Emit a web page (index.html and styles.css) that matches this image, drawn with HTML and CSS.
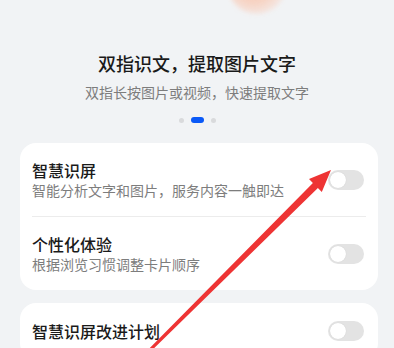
FILE: index.html
```html
<!DOCTYPE html>
<html lang="zh">
<head>
<meta charset="utf-8">
<link rel="stylesheet" href="styles.css">
</head>
<body>
<div class="page">
  <div class="hero-art"></div>
  <h1 class="title">双指识文，提取图片文字</h1>
  <p class="subtitle">双指长按图片或视频，快速提取文字</p>
  <div class="dots"><span class="dot"></span><span class="dot active"></span><span class="dot"></span></div>

  <section class="card">
    <div class="row">
      <div class="texts">
        <div class="row-title">智慧识屏</div>
        <div class="row-sub">智能分析文字和图片，服务内容一触即达</div>
      </div>
      <span class="toggle"><span class="knob"></span></span>
    </div>
    <div class="divider"></div>
    <div class="row">
      <div class="texts">
        <div class="row-title">个性化体验</div>
        <div class="row-sub">根据浏览习惯调整卡片顺序</div>
      </div>
      <span class="toggle"><span class="knob"></span></span>
    </div>
  </section>

  <section class="card card2">
    <div class="row single">
      <div class="texts">
        <div class="row-title">智慧识屏改进计划</div>
      </div>
      <span class="toggle"><span class="knob"></span></span>
    </div>
  </section>

  <svg class="arrow" width="394" height="348" viewBox="0 0 394 348">
    <polygon fill="#ee3434" points="331,170 321.8,191.9 317.9,188 151.1,351.1 148.9,348.9 312.9,183 309,179.1"/>
  </svg>
</div>
</body>
</html>
```
FILE: styles.css
```css
* { box-sizing: border-box; }
html, body { margin: 0; padding: 0; }
body {
  background: #f1f3f5;
  font-family: "Noto Sans CJK SC", "Noto Sans", sans-serif;
  width: 394px;
  height: 348px;
  overflow: hidden;
}
.page {
  position: relative;
  padding-top: 50px;
  height: 348px;
}
.hero-art {
  position: absolute;
  left: 228px;
  top: -42px;
  width: 58px;
  height: 56px;
  border-radius: 40% 40% 50% 50%;
  background: radial-gradient(ellipse at 45% 40%, #f4c2ae 0%, #f7d3c3 45%, rgba(246, 220, 210, 0.6) 70%, rgba(241, 243, 245, 0) 100%);
  transform: rotate(-8deg);
  filter: blur(2px);
}
.title {
  margin: 0;
  font-size: 18px;
  line-height: 26px;
  font-weight: 500;
  color: #1a1a1a;
  text-align: center;
}
.subtitle {
  margin: 6px 0 0;
  font-size: 14px;
  line-height: 20px;
  color: #7d7d7d;
  text-align: center;
}
.dots {
  display: flex;
  justify-content: center;
  align-items: center;
  gap: 7px;
  margin-top: 15px;
  height: 6px;
}
.dot {
  width: 5px;
  height: 5px;
  border-radius: 50%;
  background: #d9dadc;
}
.dot.active {
  width: 13px;
  height: 6px;
  border-radius: 3px;
  background: #0a59f7;
}
.card {
  margin: 20px 16px 0 20px;
  background: #fff;
  border-radius: 16px;
  padding: 0 12px;
}
.card2 { margin-top: 13px; }
.row {
  display: flex;
  align-items: center;
  justify-content: space-between;
  height: 73px;
}
.row.single { height: 56px; }
.row-title {
  font-size: 16px;
  line-height: 21px;
  color: #1a1a1a;
  font-weight: 500;
}
.row-sub {
  font-size: 14px;
  line-height: 19px;
  color: #7d7d7d;
}
.divider {
  height: 1px;
  background: #ececec;
}
.toggle {
  position: relative;
  width: 36px;
  height: 20px;
  border-radius: 10px;
  background: #e3e3e3;
  margin-right: 2px;
  flex: none;
}
.knob {
  position: absolute;
  left: 2px;
  top: 2px;
  width: 16px;
  height: 16px;
  border-radius: 50%;
  background: #fff;
  box-shadow: 0 0 1px rgba(0,0,0,0.15);
}
.arrow {
  position: absolute;
  left: 0;
  top: 0;
  pointer-events: none;
}
```
